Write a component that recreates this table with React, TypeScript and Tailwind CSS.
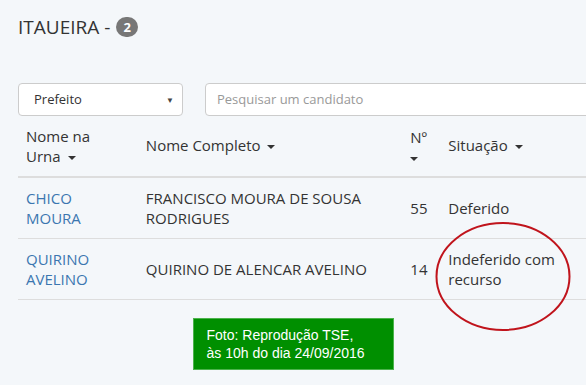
import React from 'react';

const Caret = () => (
  <span className="inline-block align-middle ml-[3px] w-0 h-0 border-t-[4px] border-t-[#333] border-x-[4px] border-x-transparent" />
);

const rows = [
  { urna: ['CHICO', 'MOURA'], nome: ['FRANCISCO MOURA DE SOUSA', 'RODRIGUES'], num: '55', sit: ['Deferido'] },
  { urna: ['QUIRINO', 'AVELINO'], nome: ['QUIRINO DE ALENCAR AVELINO'], num: '14', sit: ['Indeferido com', 'recurso'] },
];

export default function App() {
  return (
    <div
      className="relative w-[586px] h-[385px] overflow-hidden bg-[#f4f7fa] text-[#333]"
      style={{ fontFamily: '"Open Sans", sans-serif' }}
    >
      <div className="w-[620px] pl-[18px] pt-[17px]">
        {/* Title */}
        <h1 className="flex items-center text-[19px] leading-[20px] font-normal">
          ITAUEIRA -
          <span className="ml-[6px] inline-flex items-center justify-center w-[22px] h-[20px] rounded-full bg-[#777] text-white text-[13px] font-bold leading-none">
            2
          </span>
        </h1>

        {/* Filters */}
        <div className="flex gap-[22px] mt-[46px]">
          <div className="flex items-center justify-between w-[165px] h-[33px] bg-white border border-[#ccc] rounded-[4px] pl-[15px] pr-[8px] text-[13px]">
            <span>Prefeito</span>
            <span className="text-[8px] text-[#444]">▼</span>
          </div>
          <div className="flex items-center flex-1 h-[33px] bg-white border border-[#ccc] rounded-[4px] pl-[11px] text-[13px] text-[#999]">
            Pesquisar um candidato
          </div>
        </div>

        {/* Table */}
        <table className="border-collapse text-[15px] leading-[20px] mt-[2px]">
          <thead>
            <tr className="border-b-2 border-[#ddd]">
              <th className="w-[120px] px-[8px] pt-[8px] pb-[10px] text-left font-normal align-middle">
                Nome na<br />Urna <Caret />
              </th>
              <th className="w-[265px] px-[8px] text-left font-normal align-middle">
                <span className="relative top-[-2px]">Nome Completo <Caret /></span>
              </th>
              <th className="w-[38px] px-[8px] text-left font-normal align-middle">
                Nº<br />
                <span className="ml-[-3px]"><Caret /></span>
              </th>
              <th className="w-[180px] px-[8px] text-left font-normal align-middle">
                <span className="relative top-[-2px]">Situação <Caret /></span>
              </th>
            </tr>
          </thead>
          <tbody>
            {rows.map((r) => (
              <tr key={r.num} className="border-b border-[#ddd]">
                <td className="px-[8px] py-[10px] align-middle text-[#3b76b0]">
                  {r.urna[0]}<br />{r.urna[1]}
                </td>
                <td className="px-[8px] py-[10px] align-middle">
                  {r.nome.map((n, i) => (
                    <div key={i}>{n}</div>
                  ))}
                </td>
                <td className="px-[8px] py-[10px] align-middle">{r.num}</td>
                <td className="px-[8px] py-[10px] align-middle">
                  {r.sit.map((s, i) => (
                    <div key={i}>{s}</div>
                  ))}
                </td>
              </tr>
            ))}
          </tbody>
        </table>
      </div>

      {/* Caption */}
      <div className="flex justify-center mt-[18px]">
        <div
          className="w-[201px] h-[52px] bg-[#008f00] border border-[#4cb34c] px-[13px] pt-[7px] text-white text-[14px] leading-[18px]"
          style={{ fontFamily: '"Liberation Sans", Arial, sans-serif' }}
        >
          Foto: Reprodução TSE,<br />às 10h do dia 24/09/2016
        </div>
      </div>

      {/* Red ellipse annotation */}
      <svg className="absolute left-[435px] top-[221px]" width="136" height="111" viewBox="0 0 136 111">
        <ellipse cx="68" cy="55.5" rx="66.5" ry="53.5" fill="none" stroke="#c0141c" strokeWidth="2" />
      </svg>
    </div>
  );
}
